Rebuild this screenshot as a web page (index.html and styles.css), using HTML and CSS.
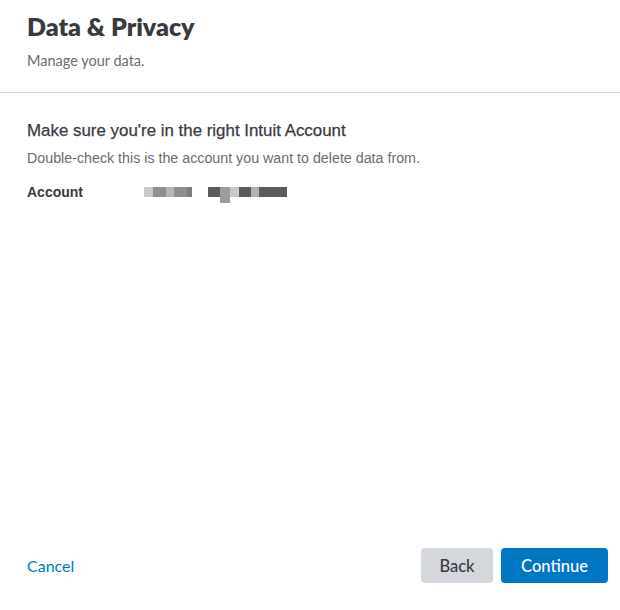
FILE: index.html
```html
<!DOCTYPE html>
<html>
<head>
<meta charset="utf-8">
<link rel="stylesheet" href="styles.css">
</head>
<body>
<div class="page">
  <header class="header">
    <h1 class="title">Data &amp; Privacy</h1>
    <p class="subtitle">Manage your data.</p>
  </header>
  <main class="content">
    <h2 class="heading">Make sure you're in the right Intuit Account</h2>
    <p class="desc">Double-check this is the account you want to delete data from.</p>
    <div class="account-row">
      <span class="account-label">Account</span>
      <div class="blur">
        <div class="blur-group">
          <span class="b b1"></span><span class="b b2"></span><span class="b b3"></span><span class="b b2"></span><span class="b b6"></span>
        </div>
        <div class="blur-group">
          <span class="b b4"></span><span class="b b5"></span><span class="b b1"></span><span class="b b4"></span><span class="b b3"></span><span class="b b4 wide"></span>
        </div>
      </div>
    </div>
  </main>
  <footer class="footer">
    <a class="cancel" href="#">Cancel</a>
    <div class="actions">
      <button class="btn btn-back">Back</button>
      <button class="btn btn-continue">Continue</button>
    </div>
  </footer>
</div>
</body>
</html>
```

FILE: styles.css
```css
* { box-sizing: border-box; }
html, body { margin: 0; padding: 0; background: #fff; }
.page {
  height: 610px;
  display: flex;
  flex-direction: column;
}
.header {
  padding: 9px 27px 0;
  border-bottom: 1px solid #d4d7dc;
  height: 93px;
}
.title {
  margin: 0;
  font-family: Lato, "Noto Sans", sans-serif;
  font-weight: 800;
  font-size: 25px;
  line-height: 34px;
  color: #393a3d;
}
.subtitle {
  margin: 9px 0 0;
  font-family: Lato, "Noto Sans", sans-serif;
  font-size: 14.5px;
  line-height: 18px;
  color: #6b6c72;
}
.content {
  flex: 1;
  padding: 27px 27px 0;
  font-family: "Liberation Sans", Arial, sans-serif;
}
.heading {
  margin: 0;
  font-size: 16.9px;
  font-weight: normal;
  line-height: 21px;
  color: #393a3d;
  -webkit-text-stroke: 0.25px #393a3d;
}
.desc {
  margin: 9px 0 0;
  font-size: 14.25px;
  line-height: 17px;
  color: #6b6c72;
}
.account-row {
  display: flex;
  align-items: flex-start;
  margin-top: 17px;
}
.account-label {
  width: 117px;
  font-size: 14px;
  line-height: 17px;
  font-weight: bold;
  color: #393a3d;
}
.blur {
  display: flex;
  gap: 16px;
  margin-top: 3px;
  filter: blur(0.7px);
}
.blur-group { display: flex; align-items: flex-start; }
.b { display: block; height: 10px; width: 8px; }
.b1 { background: #c8c9cc; width: 9px; }
.b2 { background: #8d8e92; width: 13px; }
.b3 { background: #b2b3b6; width: 8px; }
.b4 { background: #5c5d61; width: 12px; }
.b5 { background: #9c9da0; width: 10px; height: 16px; }
.b6 { background: #7d7e82; width: 5px; }
.wide { width: 28px; }
.footer {
  display: flex;
  justify-content: space-between;
  align-items: center;
  padding: 0 12px 27px 27px;
  font-family: Lato, "Noto Sans", sans-serif;
}
.cancel {
  color: #0077c5;
  text-decoration: none;
  font-size: 16px;
}
.actions { display: flex; gap: 8px; }
.btn {
  height: 35px;
  border: none;
  border-radius: 4px;
  font-family: Lato, "Noto Sans", sans-serif;
  font-size: 16.5px;
  font-weight: 500;
  padding: 0;
  cursor: pointer;
}
.btn-back { background: #d4d7dc; color: #393a3d; width: 72px; }
.btn-continue { background: #0077c5; color: #fff; width: 107px; }
```
